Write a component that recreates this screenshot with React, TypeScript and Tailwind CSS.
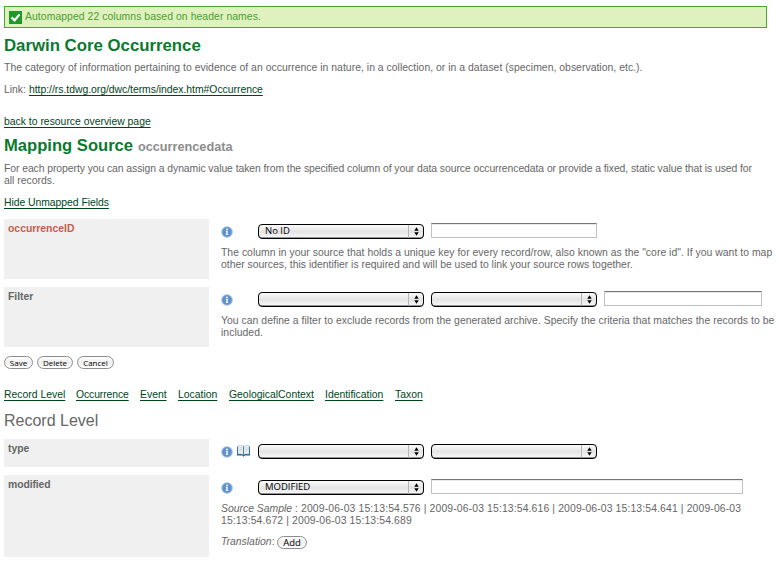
import type { ReactNode } from 'react';

function InfoIcon() {
  return (
    <svg width="12" height="12" viewBox="0 0 12 12" className="block shrink-0">
      <circle cx="6" cy="6" r="5.8" fill="#9dbde2" />
      <circle cx="6" cy="6" r="4.7" fill="#5f91cb" />
      <circle cx="6" cy="3.5" r="0.9" fill="#fff" />
      <path d="M4.9 5.1h1.8v3.1h.6v.8H4.8v-.8h.5V5.9h-.4z" fill="#fff" />
    </svg>
  );
}

function BookIcon() {
  return (
    <svg width="13" height="12" viewBox="0 0 13 12" className="block shrink-0">
      <path d="M0 1.4h1v7.6h4.6l.9.7.9-.7H12V1.4h1v9.2H7.9l-1.4 1.2-1.4-1.2H0z" fill="#22669c" />
      <path d="M1 .8C3 .2 5 .3 6.5 1.3 8 .3 10 .2 12 .8v8.2c-2-.4-4-.3-5.5.6C5 8.7 3 8.6 1 9z" fill="#eef2f5" stroke="#8fb0cc" strokeWidth=".5" />
      <path d="M6.5 1.3v8.3" stroke="#3f6d94" strokeWidth=".9" />
      <path d="M2.3 2.8h2.8M2.3 4.4h2.8M2.3 6h2.8M7.9 2.8h2.8M7.9 4.4h2.8M7.9 6h2.8" stroke="#c3cbd3" strokeWidth=".7" />
    </svg>
  );
}

function Select({ value = '' }: { value?: string }) {
  return (
    <div className="relative mt-px flex h-[15px] w-[166px] shrink-0 rounded-[4px] border border-black bg-linear-to-b from-[#fbfbfb] via-[#e4e4e4] to-[#f8f8f8] shadow-[inset_0_-0.5px_0_#333]">
      <span className="flex-1 pl-[6px] font-['Open_Sans','Noto_Sans',sans-serif] text-[9.5px] leading-[12px] text-black">{value}</span>
      <span className="flex w-[15px] items-center justify-center border-l border-[#b5b5b5]">
        <svg width="5" height="9" viewBox="0 0 5 9">
          <path d="M2.5 0.3L4.7 3.7H.3zM2.5 8.7L4.7 5.3H.3z" fill="#000" />
        </svg>
      </span>
    </div>
  );
}

function TextField({ width }: { width: string }) {
  return <div className={`h-[15px] shrink-0 border border-[#c0c0c0] border-t-[#777] bg-white shadow-[inset_0_1px_0_#e8e8e8] ${width}`} />;
}

function Btn({ children, className }: { children: ReactNode; className: string }) {
  return (
    <button
      className={`h-[13px] rounded-full border border-[#8c8c8c] bg-linear-to-b from-white via-[#eeeeee] to-white text-center font-['Open_Sans','Noto_Sans',sans-serif] leading-[11px] font-medium text-black ${className}`}
    >
      {children}
    </button>
  );
}

function Link({ children, className = '' }: { children: ReactNode; className?: string }) {
  return (
    <a className={`text-[#00441b] underline decoration-1 underline-offset-[1.5px] ${className}`}>{children}</a>
  );
}

interface FieldProps {
  label: string;
  height: string;
  labelClass?: string;
  book?: boolean;
  controls: ReactNode;
  children?: ReactNode;
}

function Field({ label, height, labelClass = '', book, controls, children }: FieldProps) {
  return (
    <div className={`flex gap-[12px] ${height}`}>
      <div className="w-[205px] shrink-0 bg-[#f0f0f0] pt-[4px] pl-[4px]">
        <span className={`block font-bold ${labelClass}`}>{label}</span>
      </div>
      <div className="min-w-0 pt-[4px]">
        <div className="flex h-[16px]">
          <div className="flex w-[37px] shrink-0 gap-[4px] pt-[3px]">
            <InfoIcon />
            {book && <div className="-mt-px"><BookIcon /></div>}
          </div>
          <div className="flex gap-[7px]">{controls}</div>
        </div>
        {children}
      </div>
    </div>
  );
}

export default function App() {
  return (
    <div className="h-[561px] w-[779px] overflow-hidden bg-white pt-[6px] pl-[4px] font-['Liberation_Sans',Arial,sans-serif] text-[10.4px] leading-[12px] whitespace-nowrap text-[#666]">
      <div className="flex h-[22px] w-[763px] border border-[#4aa82c] bg-[#e0f1c0] pl-[4px] text-[#4a9f2e]">
        <svg width="13" height="13" viewBox="0 0 13 13" className="mt-[4px] block">
          <path d="M0 0h13v13H0z" fill="#1f9a2a" />
          <path d="M2.6 6.4l3 3 5-6" fill="none" stroke="#fff" strokeWidth="2.2" />
        </svg>
        <span className="mt-[4px] ml-[3px] tracking-[0.07px]">Automapped 22 columns based on header names.</span>
      </div>

      <h1 className="mt-[8px] text-[16.8px] leading-[20px] font-bold text-[#0a7a2f]">Darwin Core Occurrence</h1>
      <p className="mt-[6px] tracking-[0.03px]">
        The category of information pertaining to evidence of an occurrence in nature, in a collection, or in a dataset (specimen, observation, etc.).
      </p>
      <p className="mt-[10px] flex">
        <span className="w-[25px]">Link:</span>
        <Link className="tracking-[-0.025px]">http://rs.tdwg.org/dwc/terms/index.htm#Occurrence</Link>
      </p>
      <p className="mt-[20px]"><Link>back to resource overview page</Link></p>

      <h1 className="mt-[8px] flex items-baseline text-[16.6px] leading-[20px] font-bold text-[#0a7a2f]">
        <span className="w-[134px]">Mapping Source</span>
        <span className="text-[12.7px] text-[#8c8c8c]">occurrencedata</span>
      </h1>
      <p className="mt-[6px]">
        <span className="tracking-[-0.07px]">
          For each property you can assign a dynamic value taken from the specified column of your data source occurrencedata or provide a fixed, static value that is used for
        </span>
        <br />
        all records.
      </p>
      <p className="mt-[10px]"><Link className="tracking-[-0.04px]">Hide Unmapped Fields</Link></p>

      <div className="mt-[10px] flex flex-col gap-[8px]">
        <Field
          label="occurrenceID"
          height="h-[60px]"
          labelClass="text-[#c0604e]"
          controls={<><Select value="No ID" /><TextField width="w-[166px]" /></>}
        >
          <p className="mt-[8px] tracking-[0.027px]">
            The column in your source that holds a unique key for every record/row, also known as the "core id". If you want to map
            <br />
            <span className="tracking-[0.005px]">other sources, this identifier is required and will be used to link your source rows together.</span>
          </p>
        </Field>
        <Field
          label="Filter"
          height="h-[60px]"
          controls={<><Select /><Select /><TextField width="w-[158px]" /></>}
        >
          <p className="mt-[8px] tracking-[0.036px]">
            You can define a filter to exclude records from the generated archive. Specify the criteria that matches the records to be
            <br />
            included.
          </p>
        </Field>
      </div>

      <div className="mt-[9px] flex gap-[4px]">
        <Btn className="w-[29px] text-[8px]">Save</Btn>
        <Btn className="w-[36px] text-[8px]">Delete</Btn>
        <Btn className="w-[37px] text-[8px]">Cancel</Btn>
      </div>

      <nav className="mt-[20px] flex">
        <span className="w-[72px]"><Link>Record Level</Link></span>
        <span className="w-[64px]"><Link className="tracking-[-0.1px]">Occurrence</Link></span>
        <span className="w-[38px]"><Link>Event</Link></span>
        <span className="w-[51px]"><Link>Location</Link></span>
        <span className="w-[96px]"><Link>GeologicalContext</Link></span>
        <span className="w-[70px]"><Link>Identification</Link></span>
        <Link>Taxon</Link>
      </nav>

      <h2 className="mt-[10px] text-[16px] leading-[20px]">Record Level</h2>

      <div className="mt-[8px] flex flex-col gap-[8px]">
        <Field label="type" height="h-[28px]" book controls={<><Select /><Select /></>} />
        <Field
          label="modified"
          height="h-[82px]"
          labelClass="tracking-[-0.1px]"
          controls={<><Select value="MODIFIED" /><TextField width="w-[312px]" /></>}
        >
          <div className="mt-[8px] tracking-[0.13px]">
            <p className="flex">
              <i className="w-[74px] tracking-[0px]">Source Sample</i>
              <span>: 2009-06-03 15:13:54.576 | 2009-06-03 15:13:54.616 | 2009-06-03 15:13:54.641 | 2009-06-03</span>
            </p>
            <p>15:13:54.672 | 2009-06-03 15:13:54.689</p>
          </div>
          <div className="mt-[9px] flex">
            <span className="w-[56px]"><i>Translation</i>:</span>
            <Btn className="w-[30px] text-[9.5px]">Add</Btn>
          </div>
        </Field>
      </div>
    </div>
  );
}
